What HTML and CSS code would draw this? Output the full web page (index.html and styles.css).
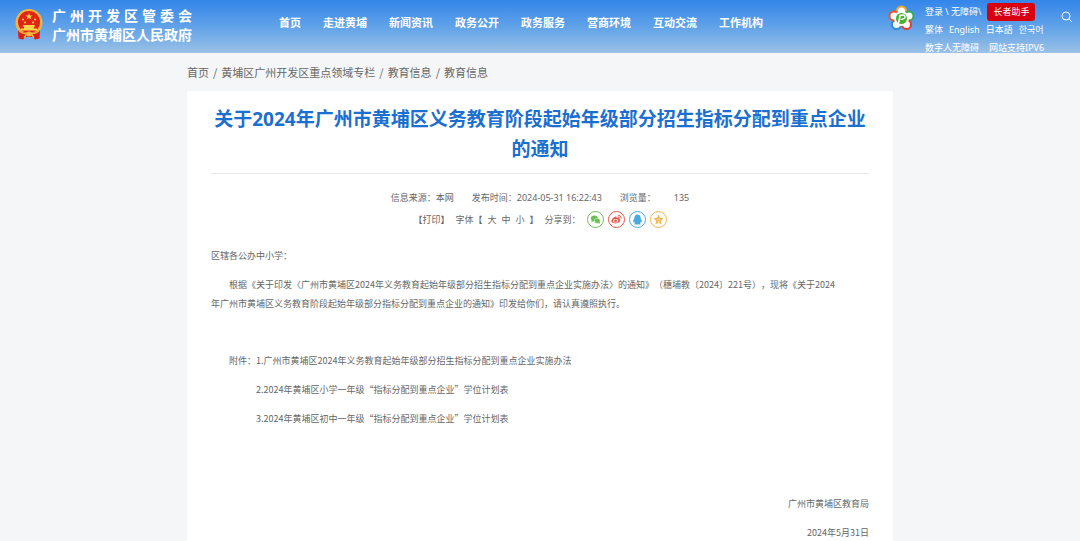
FILE: index.html
```
<!DOCTYPE html>
<html lang="zh-CN">
<head>
    <meta charset="UTF-8">
    <meta name="viewport" content="width=device-width, initial-scale=1.0">
    <title>关于2024年广州市黄埔区义务教育阶段起始年级部分招生指标分配到重点企业的通知</title>
    <link rel="stylesheet" href="styles.css">
</head>
<body>
    <header class="header">
        <a class="brand" href="#">
            <svg class="emblem" viewBox="0 0 56 62" aria-hidden="true">
                <circle cx="28" cy="27" r="27" fill="#f3b73f"/>
                <circle cx="28" cy="26" r="22" fill="#e02418"/>
                <path d="M28 8l2 5h5l-4 3 2 5-5-3-5 3 2-5-4-3h5z" fill="#ffd34a"/>
                <circle cx="16" cy="21" r="2" fill="#ffd34a"/>
                <circle cx="40" cy="21" r="2" fill="#ffd34a"/>
                <circle cx="20" cy="27" r="2" fill="#ffd34a"/>
                <circle cx="36" cy="27" r="2" fill="#ffd34a"/>
                <path d="M17 32h22l2 3h-3v4h6v4H12v-4h6v-4h-3z" fill="#ffd34a"/>
                <path d="M6 43q22 9 44 0l-1 16-9 2-4-5H20l-4 5-9-2z" fill="#d81e16"/>
                <path d="M8 44q10 8 20 3 10 5 20-3M18 57l5-6h10l5 6" fill="none" stroke="#f3b73f" stroke-width="3"/>
                <circle cx="28" cy="50" r="5" fill="#f3b73f"/>
            </svg>
            <span class="brand-text">
                <span class="brand-line">广 州 开 发 区 管 委 会</span>
                <span class="brand-line">广州市黄埔区人民政府</span>
            </span>
        </a>
        <nav class="nav">
            <a href="#">首页</a>
            <a href="#">走进黄埔</a>
            <a href="#">新闻资讯</a>
            <a href="#">政务公开</a>
            <a href="#">政务服务</a>
            <a href="#">营商环境</a>
            <a href="#">互动交流</a>
            <a href="#">工作机构</a>
        </nav>
        <div class="tools">
            <svg class="flower" viewBox="0 0 54 52" aria-hidden="true">
                <g fill="#fff" stroke-width="4">
                    <circle cx="27" cy="12" r="9" stroke="#f4a62a"/>
                    <circle cx="42" cy="22" r="9" stroke="#35a853"/>
                    <circle cx="37" cy="39" r="9" stroke="#e2402f"/>
                    <circle cx="17" cy="39" r="9" stroke="#2c8fd6"/>
                    <circle cx="12" cy="22" r="9" stroke="#e8562f"/>
                </g>
                <circle cx="27" cy="27" r="15" fill="#fff"/>
                <circle cx="27" cy="27" r="11" fill="#4cb035"/>
                <path d="M21 37l3-16q9-3 10 2t-9 6" fill="none" stroke="#fff" stroke-width="3"/>
            </svg>
            <div class="links">
                <div class="links-row">
                    <span><a href="#">登录</a> \ <a href="#">无障碍</a>\</span>
                    <button class="elder" type="button">长者助手</button>
                </div>
                <div class="links-row">
                    <a href="#">繁体</a>
                    <a href="#">English</a>
                    <a href="#">日本語</a>
                    <a href="#">한국어</a>
                </div>
                <div class="links-row wide">
                    <a href="#">数字人无障碍</a>
                    <a href="#">网站支持IPV6</a>
                </div>
            </div>
            <button class="search" type="button" aria-label="搜索">
                <svg viewBox="0 0 12 12" aria-hidden="true">
                    <circle cx="5" cy="5" r="4" fill="none" stroke="#fff"/>
                    <path d="M8 8l3 3" stroke="#fff"/>
                </svg>
            </button>
        </div>
    </header>

    <main class="container">
        <nav class="breadcrumb">
            <a href="#">首页</a><span>/</span>
            <a href="#">黄埔区广州开发区重点领域专栏</a><span>/</span>
            <a href="#">教育信息</a><span>/</span>
            <a href="#">教育信息</a>
        </nav>
        <article class="card">
            <h1 class="title">关于2024年广州市黄埔区义务教育阶段起始年级部分招生指标分配到重点企业的通知</h1>
            <div class="meta">
                <span>信息来源：本网</span>
                <span>发布时间：2024-05-31 16:22:43</span>
                <span>浏览量：</span>
                <span>135</span>
            </div>
            <div class="share">
                <button type="button">【打印】</button>
                <span class="sizes">字体【
                    <button type="button">大</button>
                    <button type="button">中</button>
                    <button type="button">小</button>
                】</span>
                <span>分享到：</span>
                <span class="icons">
                    <a class="icon wechat" href="#" aria-label="微信">
                        <svg viewBox="0 0 24 24"><ellipse cx="9.500" cy="9.500" rx="7.500" ry="6.500"/><path d="M4 13l-1 5 5-3z"/><ellipse cx="16" cy="15" rx="6.500" ry="5.500" stroke="#fff"/><path d="M18 19l3 3v-5z"/></svg>
                    </a>
                    <a class="icon weibo" href="#" aria-label="微博">
                        <svg viewBox="0 0 24 24"><path d="M9 6c3-1 4 0 3 3 4-2 7-1 6 2 3 1 3 4 1 6-4 5-15 5-18 0C0 13 5 7 9 6z"/><ellipse cx="10" cy="15" rx="6" ry="4" fill="#fff"/><circle cx="10" cy="15" r="3"/><path d="M15 3q7-1 7 7M15 6q4 0 4 4" fill="none" stroke="#e6584c" stroke-width="2"/></svg>
                    </a>
                    <a class="icon qq" href="#" aria-label="QQ">
                        <svg viewBox="0 0 24 24"><path d="M12 1c5 0 7 4 7 9 2 3 3 6 2 8l-2-1-1 3 1 3H5l1-3-1-3-2 1c-1-2 0-5 2-8 0-5 2-9 7-9z"/></svg>
                    </a>
                    <a class="icon star" href="#" aria-label="收藏">
                        <svg viewBox="0 0 24 24"><path d="M12 1l3 7 8 1-6 6 2 8-7-4-7 4 2-8-6-6 8-1z"/><path d="M8 12h7l-5 5h6" fill="none" stroke="#fff"/></svg>
                    </a>
                </span>
            </div>
            <div class="content">
                <p>区辖各公办中小学：</p>
                <p class="indent">根据《关于印发〈广州市黄埔区2024年义务教育起始年级部分招生指标分配到重点企业实施办法〉的通知》（穗埔教〔2024〕221号），现将《关于2024<br>年广州市黄埔区义务教育阶段起始年级部分指标分配到重点企业的通知》印发给你们，请认真遵照执行。</p>
                <div class="attachments">
                    <span>附件：</span>
                    <div>
                        <p><a href="#">1.广州市黄埔区2024年义务教育起始年级部分招生指标分配到重点企业实施办法</a></p>
                        <p><a href="#">2.2024年黄埔区小学一年级“指标分配到重点企业”学位计划表</a></p>
                        <p><a href="#">3.2024年黄埔区初中一年级“指标分配到重点企业”学位计划表</a></p>
                    </div>
                </div>
                <div class="sign">
                    <p>广州市黄埔区教育局</p>
                    <p>2024年5月31日</p>
                </div>
            </div>
        </article>
    </main>
</body>
</html>
```

FILE: styles.css
```
* {
    box-sizing: border-box;
}

body {
    margin: 0;
    min-height: 100vh;
    display: flex;
    flex-direction: column;
    background-color: #f4f6f8;
    color: #666;
    font-family: "Noto Sans CJK SC", "Noto Sans CJK KR", sans-serif;
    font-size: 9px;
    line-height: 19px;
    text-spacing-trim: space-all;
}

a {
    color: inherit;
    text-decoration: none;
}

button {
    padding: 0;
    border: 0;
    background: none;
    color: inherit;
    font: inherit;
    cursor: pointer;
}

p {
    margin: 0 0 10px;
}

/* header */
.header {
    display: flex;
    align-items: flex-start;
    height: 53px;
    padding: 0 7px 0 15px;
    overflow: hidden;
    background: linear-gradient(#3385ea, #65a5e8 55%, #9bc1e6);
    color: #fff;
}

.brand {
    display: flex;
    gap: 9px;
    padding-top: 6px;
}

.emblem {
    width: 28px;
    height: 31px;
    margin-top: 3px;
}

.brand-text {
    width: 140px;
    font-size: 14px;
    font-weight: 700;
}

.brand-line {
    display: block;
    white-space: nowrap;
    text-align: justify;
    text-align-last: justify;
}

.nav {
    display: flex;
    gap: 22px;
    margin-left: 87px;
    padding-top: 13px;
    font-size: 11px;
    font-weight: 700;
    white-space: nowrap;
}

.tools {
    display: flex;
    align-items: flex-start;
    margin-left: auto;
    padding-top: 3px;
}

.flower {
    width: 27px;
    height: 26px;
    margin: 2px 10px 0 0;
}

.links {
    width: 136px;
    font-family: "Noto Sans", "Noto Sans CJK SC", "Noto Sans CJK KR", sans-serif;
    line-height: 18px;
    white-space: nowrap;
}

.links-row {
    display: flex;
    gap: 6px;
}

.wide {
    gap: 10px;
}

.elder {
    padding: 0 6px;
    border-radius: 3px;
    background-color: #d8000f;
}

.search {
    width: 12px;
    height: 12px;
    margin-top: 8px;
}

.search svg {
    display: block;
}

/* page */
.container {
    display: flex;
    flex-direction: column;
    flex: 1;
    width: 100%;
    max-width: 706px;
    margin: 0 auto;
}

.breadcrumb {
    display: flex;
    padding: 10px 0 9px;
    font-size: 11px;
}

.breadcrumb span {
    margin: 0 4px;
}

.card {
    flex: 1;
    padding: 13px 24px 0;
    background-color: #fff;
}

.title {
    margin: 0;
    padding-bottom: 9px;
    border-bottom: 1px solid #e8e8e8;
    color: #1b6fd0;
    font-family: "Noto Sans", "Noto Sans CJK SC", sans-serif;
    font-size: 19px;
    font-weight: 700;
    line-height: 30px;
    text-align: center;
}

.meta {
    display: flex;
    justify-content: center;
    gap: 18px;
    padding-top: 14px;
    font-family: "Noto Sans", "Noto Sans CJK SC", sans-serif;
}

.share {
    display: flex;
    justify-content: center;
    align-items: center;
    gap: 6px;
    padding-top: 3px;
}

.sizes {
    display: flex;
    gap: 5px;
}

.icons {
    display: flex;
    gap: 4px;
}

.icon {
    display: flex;
    justify-content: center;
    align-items: center;
    width: 17px;
    height: 17px;
    border: 1px solid;
    border-radius: 50%;
}

.icon svg {
    width: 11px;
    height: 11px;
    fill: currentColor;
}

.wechat {
    color: #6cbf55;
}

.weibo {
    color: #e6584c;
}

.qq {
    color: #4aa9df;
}

.star {
    color: #f3b552;
}

.content {
    padding-top: 17px;
}

.indent {
    text-indent: 2em;
}

.attachments {
    display: flex;
    padding: 28px 0 0 18px;
}

.sign {
    padding-top: 56px;
    text-align: right;
}

.sign p:last-child {
    margin: 0;
}
```
